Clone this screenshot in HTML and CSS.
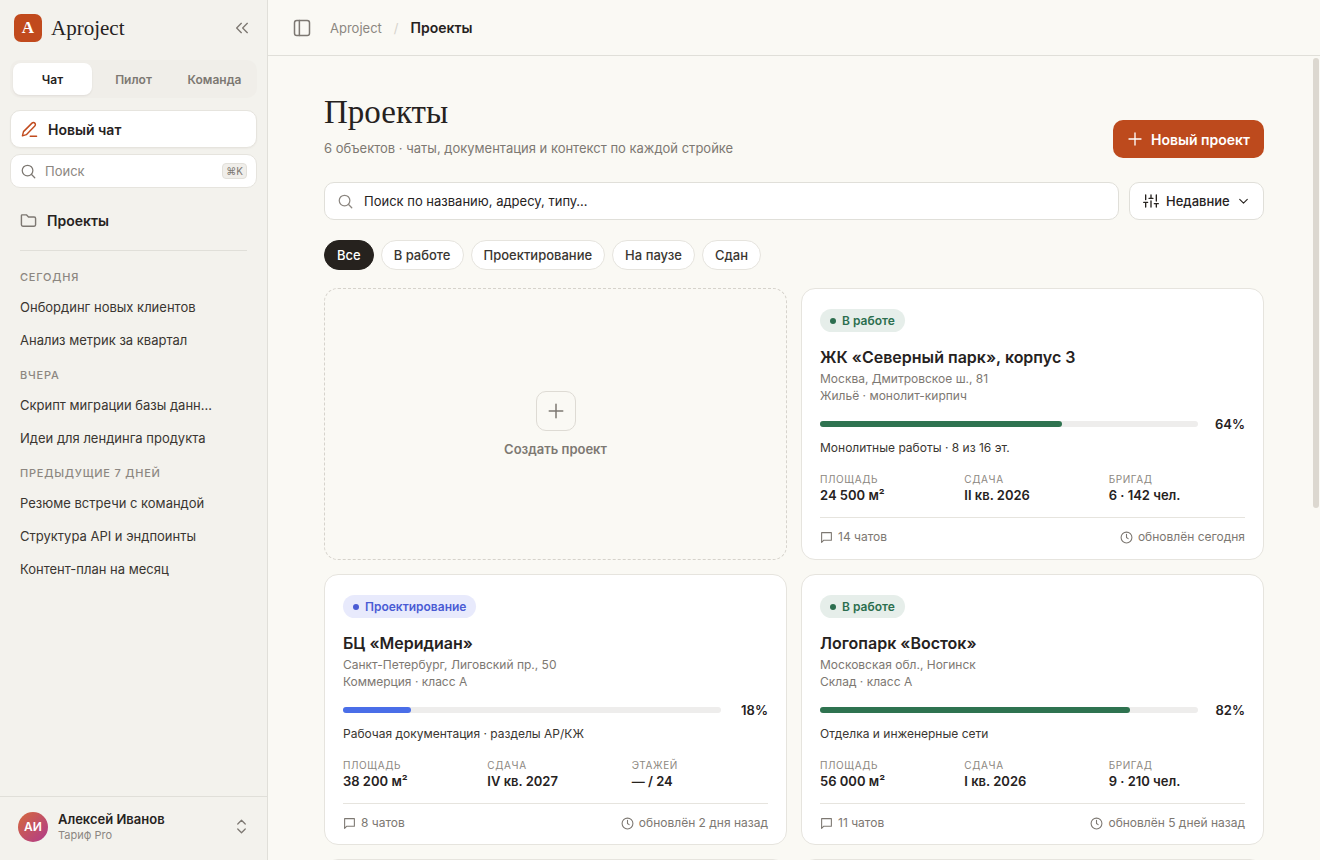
FILE: index.html
```html
<!DOCTYPE html>
<html lang="ru">
<head>
    <meta charset="UTF-8">
    <meta name="viewport" content="width=device-width, initial-scale=1.0">
    <title>Aproject — Проекты</title>
    <link rel="stylesheet" href="styles.css">
</head>
<body>
    <!-- shared icons -->
    <svg class="sprite" aria-hidden="true">
        <symbol id="i-search" viewBox="0 0 24 24"><circle cx="10.500" cy="10.500" r="8.500"/><path d="M22 22l-5.500-5.500"/></symbol>
        <symbol id="i-plus" viewBox="0 0 24 24"><path d="M12 3v18M3 12h18"/></symbol>
        <symbol id="i-chat" viewBox="0 0 24 24"><path d="M3 3h18v14H7l-4 4z"/></symbol>
        <symbol id="i-clock" viewBox="0 0 24 24"><circle cx="12" cy="12" r="10"/><path d="M12 6v6l3 2"/></symbol>
    </svg>

    <div class="app">
        <aside class="sidebar">
            <div class="brand">
                <span class="logo">A</span>
                <span class="brand-name">Aproject</span>
                <button class="icon-btn" aria-label="Свернуть">
                    <svg width="16" height="16" viewBox="0 0 24 24"><path d="M11 19l-7-7 7-7M20 19l-7-7 7-7"/></svg>
                </button>
            </div>

            <div class="tabs">
                <button class="tab active">Чат</button>
                <button class="tab">Пилот</button>
                <button class="tab">Команда</button>
            </div>

            <button class="new-chat">
                <svg width="17" height="17" viewBox="0 0 24 24"><path d="M2 21l1.500-6L15.500 3a2.600 2.600 0 0 1 4 4L7.500 19.300zM13 21.500h9"/></svg>
                Новый чат
            </button>

            <div class="side-search">
                <svg width="15" height="15"><use href="#i-search"/></svg>
                <input type="text" placeholder="Поиск" aria-label="Поиск">
                <kbd>⌘K</kbd>
            </div>

            <a class="nav-link" href="#">
                <svg width="17" height="17" viewBox="0 0 24 24"><path d="M3 4h6l3 3h8a2 2 0 0 1 2 2v9a2 2 0 0 1-2 2H4a2 2 0 0 1-2-2V5a1 1 0 0 1 1-1z"/></svg>
                Проекты
            </a>

            <nav class="history">
                <h2>Сегодня</h2>
                <a href="#">Онбординг новых клиентов</a>
                <a href="#">Анализ метрик за квартал</a>
                <h2>Вчера</h2>
                <a href="#">Скрипт миграции базы данн…</a>
                <a href="#">Идеи для лендинга продукта</a>
                <h2>Предыдущие 7 дней</h2>
                <a href="#">Резюме встречи с командой</a>
                <a href="#">Структура API и эндпоинты</a>
                <a href="#">Контент-план на месяц</a>
            </nav>

            <button class="user">
                <span class="avatar">АИ</span>
                <span class="user-info">
                    <span class="user-name">Алексей Иванов</span>
                    <span class="user-plan">Тариф Pro</span>
                </span>
                <svg width="15" height="15" viewBox="0 0 24 24"><path d="M6 8l6-6 6 6M6 16l6 6 6-6"/></svg>
            </button>
        </aside>

        <main class="main">
            <header class="topbar">
                <button class="icon-btn" aria-label="Боковая панель">
                    <svg width="18" height="18" viewBox="0 0 24 24"><rect x="2" y="2" width="20" height="20" rx="3"/><path d="M8.500 2v20"/></svg>
                </button>
                <a class="crumb" href="#">Aproject</a>
                <span class="slash">/</span>
                <span class="crumb-current">Проекты</span>
            </header>

            <div class="content">
                <div class="page-head">
                    <div>
                        <h1>Проекты</h1>
                        <p>6 объектов · чаты, документация и контекст по каждой стройке</p>
                    </div>
                    <button class="primary">
                        <svg width="16" height="16"><use href="#i-plus"/></svg>
                        Новый проект
                    </button>
                </div>

                <div class="toolbar">
                    <div class="search">
                        <svg width="15" height="15"><use href="#i-search"/></svg>
                        <input type="text" placeholder="Поиск по названию, адресу, типу…" aria-label="Поиск проектов">
                    </div>
                    <div class="sort">
                        <svg width="16" height="16" viewBox="0 0 24 24"><path d="M4 21v-7M4 10V3M12 21v-9M12 8V3M20 21v-5M20 12V3M1 14h6M9 8h6M17 16h6"/></svg>
                        <select aria-label="Сортировка">
                            <option>Недавние</option>
                            <option>По имени</option>
                        </select>
                        <svg width="13" height="13" viewBox="0 0 24 24"><path d="M5 8l7 7 7-7"/></svg>
                    </div>
                </div>

                <div class="chips">
                    <button class="chip active">Все</button>
                    <button class="chip">В работе</button>
                    <button class="chip">Проектирование</button>
                    <button class="chip">На паузе</button>
                    <button class="chip">Сдан</button>
                </div>

                <div class="grid">
                    <button class="create">
                        <span class="create-icon"><svg width="18" height="18"><use href="#i-plus"/></svg></span>
                        Создать проект
                    </button>

                    <article class="card green">
                        <span class="status">В работе</span>
                        <h3>ЖК «Северный парк», корпус 3</h3>
                        <p class="address">Москва, Дмитровское ш., 81<br>Жильё · монолит-кирпич</p>
                        <div class="progress">
                            <div class="track"><div class="fill" style="width: 64%"></div></div>
                            <span class="percent">64%</span>
                        </div>
                        <p class="stage">Монолитные работы · 8 из 16 эт.</p>
                        <dl class="stats">
                            <div><dt>Площадь</dt><dd>24 500 м²</dd></div>
                            <div><dt>Сдача</dt><dd>II кв. 2026</dd></div>
                            <div><dt>Бригад</dt><dd>6 · 142 чел.</dd></div>
                        </dl>
                        <footer class="card-foot">
                            <span><svg width="13" height="13"><use href="#i-chat"/></svg>14 чатов</span>
                            <span><svg width="13" height="13"><use href="#i-clock"/></svg>обновлён сегодня</span>
                        </footer>
                    </article>

                    <article class="card blue">
                        <span class="status">Проектирование</span>
                        <h3>БЦ «Меридиан»</h3>
                        <p class="address">Санкт-Петербург, Лиговский пр., 50<br>Коммерция · класс A</p>
                        <div class="progress">
                            <div class="track"><div class="fill" style="width: 18%"></div></div>
                            <span class="percent">18%</span>
                        </div>
                        <p class="stage">Рабочая документация · разделы АР/КЖ</p>
                        <dl class="stats">
                            <div><dt>Площадь</dt><dd>38 200 м²</dd></div>
                            <div><dt>Сдача</dt><dd>IV кв. 2027</dd></div>
                            <div><dt>Этажей</dt><dd>— / 24</dd></div>
                        </dl>
                        <footer class="card-foot">
                            <span><svg width="13" height="13"><use href="#i-chat"/></svg>8 чатов</span>
                            <span><svg width="13" height="13"><use href="#i-clock"/></svg>обновлён 2 дня назад</span>
                        </footer>
                    </article>

                    <article class="card green">
                        <span class="status">В работе</span>
                        <h3>Логопарк «Восток»</h3>
                        <p class="address">Московская обл., Ногинск<br>Склад · класс A</p>
                        <div class="progress">
                            <div class="track"><div class="fill" style="width: 82%"></div></div>
                            <span class="percent">82%</span>
                        </div>
                        <p class="stage">Отделка и инженерные сети</p>
                        <dl class="stats">
                            <div><dt>Площадь</dt><dd>56 000 м²</dd></div>
                            <div><dt>Сдача</dt><dd>I кв. 2026</dd></div>
                            <div><dt>Бригад</dt><dd>9 · 210 чел.</dd></div>
                        </dl>
                        <footer class="card-foot">
                            <span><svg width="13" height="13"><use href="#i-chat"/></svg>11 чатов</span>
                            <span><svg width="13" height="13"><use href="#i-clock"/></svg>обновлён 5 дней назад</span>
                        </footer>
                    </article>

                    <article class="card"></article>
                    <article class="card"></article>
                </div>
            </div>
            <div class="scroll-thumb"></div>
        </main>
    </div>
</body>
</html>
```
FILE: styles.css
```css
* {
    box-sizing: border-box;
}

body {
    margin: 0;
    font-family: Inter, "Liberation Sans", sans-serif;
    font-size: 13px;
    color: #26221e;
    background: #faf9f4;
}

h1, h2, h3, p, dl, dd {
    margin: 0;
}

button, input, select {
    font: inherit;
    color: inherit;
    border: none;
    background: none;
    padding: 0;
    outline: none;
}

button {
    cursor: pointer;
}

a {
    color: inherit;
    text-decoration: none;
}

svg {
    flex: none;
    fill: none;
    stroke: currentColor;
    stroke-width: 2;
    stroke-linecap: round;
    stroke-linejoin: round;
}

.sprite {
    display: none;
}

.app {
    display: flex;
    height: 100vh;
}

/* sidebar */
.sidebar {
    width: 268px;
    flex: none;
    display: flex;
    flex-direction: column;
    background: #f3f2ed;
    border-right: 1px solid #e0dfd9;
}

.brand {
    display: flex;
    align-items: center;
    gap: 9px;
    padding: 14px 17px 18px 14px;
}

.logo {
    width: 28px;
    height: 28px;
    border-radius: 7px;
    background: #c14a1d;
    color: #fff;
    font: bold 17px/28px "Liberation Serif", serif;
    text-align: center;
}

.brand-name {
    flex: 1;
    font: 21px/28px "Liberation Serif", serif;
}

.icon-btn {
    display: flex;
    color: #7d7872;
}

.tabs {
    display: grid;
    grid-template-columns: repeat(3, 1fr);
    gap: 2px;
    margin: 0 10px 12px;
    padding: 3px;
    border-radius: 10px;
    background: #f0eee9;
}

.tab {
    height: 32px;
    border-radius: 8px;
    font-size: 12px;
    font-weight: 600;
    color: #7d7872;
}

.tab.active {
    background: #fff;
    color: #26221e;
    box-shadow: 0 1px 2px rgba(40, 30, 20, 0.08);
}

.new-chat {
    display: flex;
    align-items: center;
    gap: 10px;
    height: 38px;
    margin: 0 10px 6px;
    padding: 0 10px;
    border: 1px solid #e6e4de;
    border-radius: 10px;
    background: #fff;
    font-size: 14px;
    font-weight: 600;
    box-shadow: 0 1px 2px rgba(40, 30, 20, 0.04);
}

.new-chat svg {
    color: #c14a1d;
}

.side-search {
    display: flex;
    align-items: center;
    gap: 9px;
    height: 34px;
    margin: 0 10px 14px;
    padding: 0 9px 0 10px;
    border: 1px solid #e6e4de;
    border-radius: 10px;
    background: #fff;
    color: #7d7872;
}

.side-search input {
    flex: 1;
    min-width: 0;
}

.side-search input::placeholder {
    color: #8c8781;
}

kbd {
    padding: 0 3px;
    border: 1px solid #e2e0da;
    border-radius: 4px;
    background: #f0eeea;
    font: 10px/14px Inter, sans-serif;
}

.nav-link {
    display: flex;
    align-items: center;
    gap: 10px;
    height: 36px;
    margin: 0 10px 12px;
    padding: 0 10px;
    font-size: 14px;
    font-weight: 600;
}

.nav-link svg {
    color: #7d7872;
}

.history {
    flex: 1;
    min-height: 0;
    margin: 0 20px;
    padding-top: 8px;
    border-top: 1px solid #e0dfd9;
    color: #3a3631;
}

.history h2 {
    padding: 11px 0 7px;
    font-size: 11px;
    line-height: 14px;
    font-weight: 500;
    letter-spacing: 0.07em;
    text-transform: uppercase;
    color: #8c8781;
}

.history a {
    display: block;
    line-height: 33px;
    white-space: nowrap;
}

.user {
    display: flex;
    align-items: center;
    gap: 10px;
    height: 64px;
    padding: 0 18px 4px;
    border-top: 1px solid #e0dfd9;
    text-align: left;
}

.user svg {
    color: #7d7872;
}

.avatar {
    width: 30px;
    height: 30px;
    border-radius: 50%;
    background: linear-gradient(135deg, #d5693c, #b03a8c);
    color: #fff;
    font-size: 12px;
    line-height: 30px;
    font-weight: 600;
    text-align: center;
}

.user-info {
    flex: 1;
}

.user-name, .user-plan {
    display: block;
    line-height: 16px;
}

.user-name {
    font-weight: 600;
}

.user-plan {
    font-size: 11px;
    color: #8c8781;
}

/* main */
.main {
    position: relative;
    flex: 1;
    min-width: 0;
    display: flex;
    flex-direction: column;
}

.topbar {
    display: flex;
    align-items: center;
    flex: none;
    height: 56px;
    padding: 0 25px;
    border-bottom: 1px solid #e0dfd9;
}

.crumb {
    margin-left: 19px;
    color: #8c8781;
}

.slash {
    margin: 0 12px;
    color: #d6d3cc;
}

.crumb-current {
    font-size: 14px;
    font-weight: 600;
}

.content {
    flex: 1;
    min-height: 0;
    overflow-y: auto;
    scrollbar-width: none;
    padding: 36px 56px;
}

.scroll-thumb {
    position: absolute;
    top: 58px;
    right: 1px;
    width: 6px;
    height: 450px;
    border-radius: 3px;
    background: #dcd8d0;
}

.page-head {
    display: flex;
    align-items: flex-end;
    justify-content: space-between;
    margin-bottom: 24px;
}

h1 {
    font: 33px/40px "Liberation Serif", serif;
}

.page-head p {
    margin-top: 6px;
    line-height: 20px;
    color: #7d7872;
}

.primary {
    display: flex;
    align-items: center;
    gap: 8px;
    height: 38px;
    padding: 0 14px;
    border-radius: 10px;
    background: #bd4a1d;
    color: #fff;
    font-size: 14px;
    font-weight: 600;
}

.toolbar {
    display: flex;
    gap: 10px;
    margin-bottom: 20px;
}

.search, .sort {
    display: flex;
    align-items: center;
    height: 38px;
    padding: 0 13px;
    border: 1px solid #e0dfd9;
    border-radius: 10px;
    background: #fff;
}

.search {
    flex: 1;
    gap: 11px;
}

.search svg {
    color: #8c8781;
}

.search input {
    flex: 1;
}

.search input::placeholder {
    color: #26221e;
}

.sort {
    gap: 7px;
    font-weight: 500;
}

.sort select {
    appearance: none;
}

.chips {
    display: flex;
    gap: 7px;
    margin-bottom: 18px;
}

.chip {
    height: 30px;
    padding: 0 12px;
    border: 1px solid #e6e4de;
    border-radius: 15px;
    background: #fff;
    font-weight: 500;
    color: #3a3631;
}

.chip.active {
    border-color: #26221e;
    background: #26221e;
    color: #fff;
}

.grid {
    display: grid;
    grid-template-columns: 1fr 1fr;
    gap: 14px;
}

.create {
    display: flex;
    flex-direction: column;
    align-items: center;
    justify-content: center;
    gap: 10px;
    min-height: 272px;
    border: 1px dashed #d6d3cc;
    border-radius: 14px;
    color: #7d7872;
    font-weight: 600;
}

.create-icon {
    display: flex;
    align-items: center;
    justify-content: center;
    width: 40px;
    height: 40px;
    border: 1px solid #dedbd4;
    border-radius: 10px;
}

.card {
    padding: 20px 18px 12px;
    border: 1px solid #e6e4de;
    border-radius: 14px;
    background: #fff;
}

.status {
    display: flex;
    align-items: center;
    gap: 6px;
    width: fit-content;
    height: 23px;
    padding: 0 10px;
    border-radius: 12px;
    font-size: 12px;
    font-weight: 600;
}

.status::before {
    content: "";
    width: 6px;
    height: 6px;
    border-radius: 50%;
    background: currentColor;
}

.green .status {
    background: #e6eeea;
    color: #2c6e4f;
}

.blue .status {
    background: #e8eafc;
    color: #4a5bd4;
}

.card h3 {
    margin-top: 15px;
    font-size: 16px;
    line-height: 20px;
    font-weight: 600;
}

.address {
    margin-top: 3px;
    font-size: 12px;
    line-height: 17px;
    color: #7d7872;
}

.progress {
    display: flex;
    align-items: center;
    gap: 12px;
    margin-top: 12px;
}

.track {
    flex: 1;
    height: 6px;
    border-radius: 3px;
    background: #eeedec;
}

.fill {
    height: 6px;
    border-radius: 3px;
}

.green .fill {
    background: #2f7350;
}

.blue .fill {
    background: #4a6ee8;
}

.percent {
    width: 35px;
    line-height: 16px;
    font-weight: 600;
    text-align: right;
}

.stage {
    margin-top: 7px;
    font-size: 12px;
    line-height: 18px;
    color: #3a3631;
}

.stats {
    display: grid;
    grid-template-columns: repeat(3, 1fr);
    gap: 8px;
    margin-top: 14px;
    padding-bottom: 14px;
    border-bottom: 1px solid #e6e4de;
}

.stats dt {
    font-size: 10px;
    line-height: 16px;
    letter-spacing: 0.06em;
    text-transform: uppercase;
    color: #8c8781;
}

.stats dd {
    line-height: 16px;
    font-weight: 600;
}

.card-foot {
    display: flex;
    justify-content: space-between;
    margin-top: 10px;
    font-size: 12px;
    line-height: 18px;
    color: #7d7872;
}

.card-foot span {
    display: flex;
    align-items: center;
    gap: 5px;
}
```
